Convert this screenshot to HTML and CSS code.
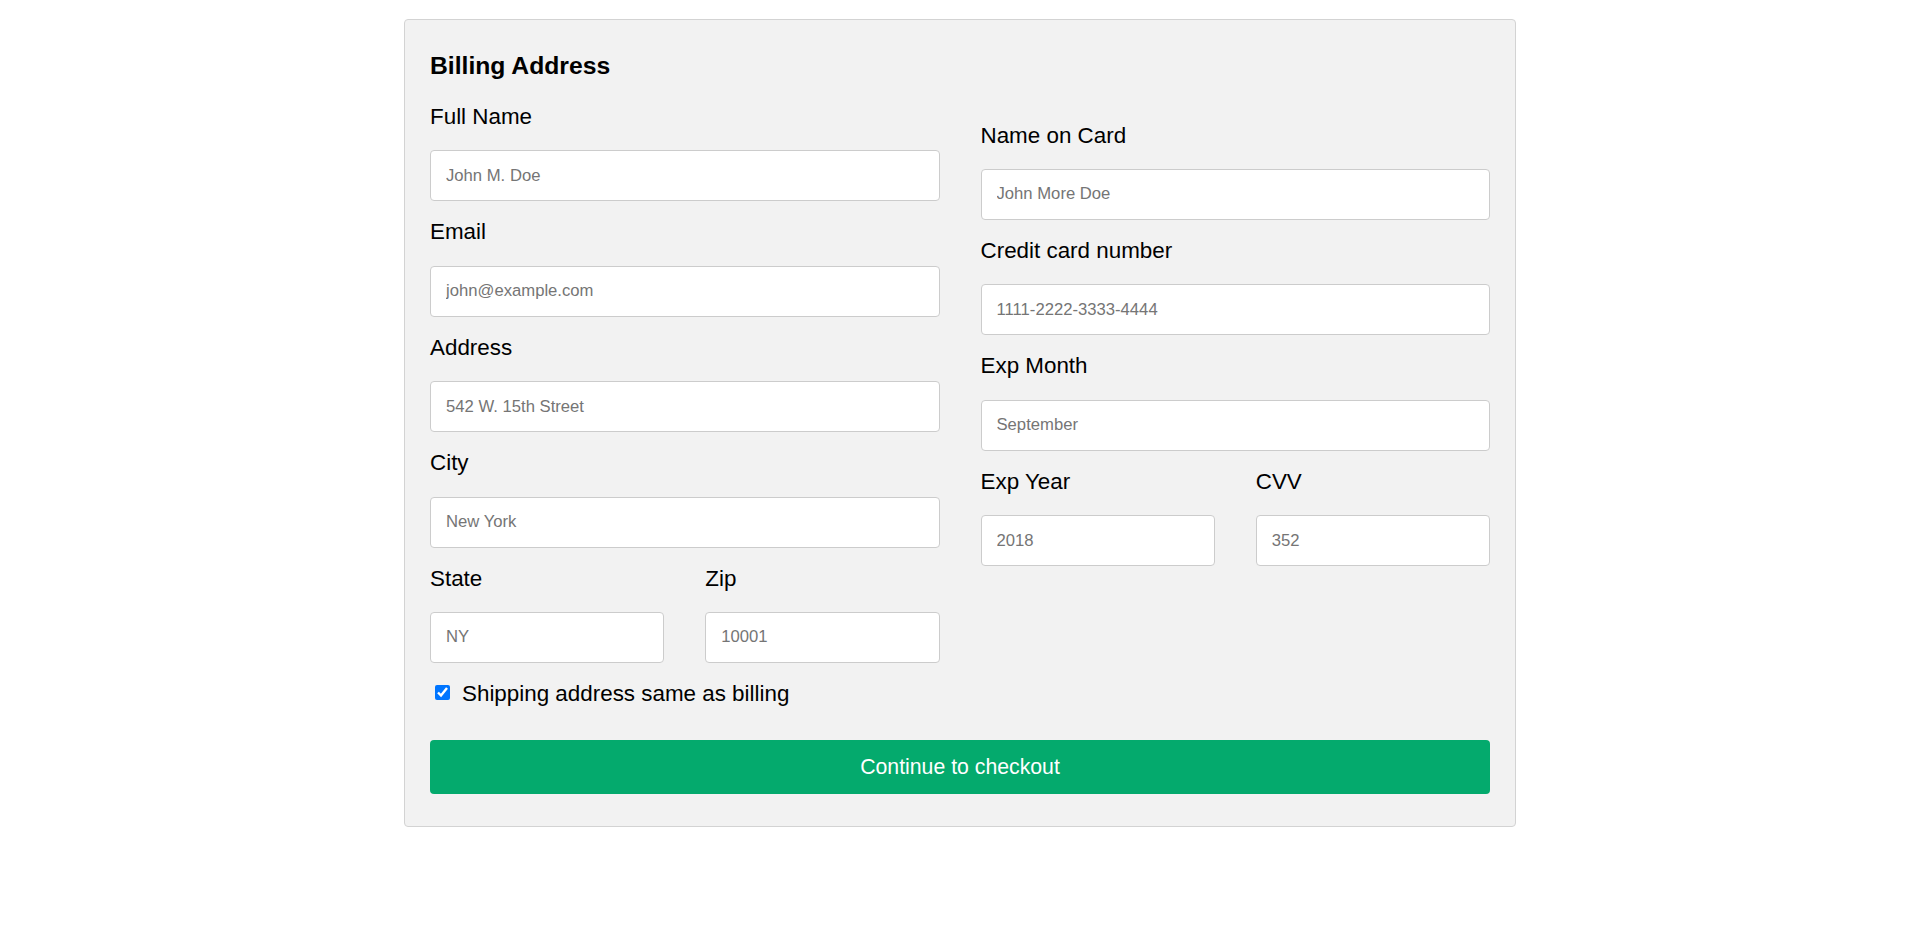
FILE: index.html
```html
<!DOCTYPE html>
<html lang="en">
<head>
<meta charset="utf-8">
<title>Checkout</title>
<link rel="stylesheet" href="styles.css">
</head>
<body>
<div class="container">
  <form class="form">
    <h3 class="title">Billing Address</h3>
    <div class="row">
      <div class="col">
        <label class="lbl" for="fname">Full Name</label>
        <input class="field" type="text" id="fname" placeholder="John M. Doe">
        <label class="lbl" for="email">Email</label>
        <input class="field" type="text" id="email" placeholder="john@example.com">
        <label class="lbl" for="adr">Address</label>
        <input class="field" type="text" id="adr" placeholder="542 W. 15th Street">
        <label class="lbl" for="city">City</label>
        <input class="field" type="text" id="city" placeholder="New York">
        <div class="row">
          <div class="col">
            <label class="lbl" for="state">State</label>
            <input class="field" type="text" id="state" placeholder="NY">
          </div>
          <div class="col">
            <label class="lbl" for="zip">Zip</label>
            <input class="field" type="text" id="zip" placeholder="10001">
          </div>
        </div>
      </div>
      <div class="col col-pay">
        <label class="lbl" for="cname">Name on Card</label>
        <input class="field" type="text" id="cname" placeholder="John More Doe">
        <label class="lbl" for="ccnum">Credit card number</label>
        <input class="field" type="text" id="ccnum" placeholder="1111-2222-3333-4444">
        <label class="lbl" for="expmonth">Exp Month</label>
        <input class="field" type="text" id="expmonth" placeholder="September">
        <div class="row">
          <div class="col">
            <label class="lbl" for="expyear">Exp Year</label>
            <input class="field" type="text" id="expyear" placeholder="2018">
          </div>
          <div class="col">
            <label class="lbl" for="cvv">CVV</label>
            <input class="field" type="text" id="cvv" placeholder="352">
          </div>
        </div>
      </div>
    </div>
    <label class="lbl check"><input class="checkbox" type="checkbox" checked>Shipping address same as billing</label>
    <button class="btn" type="button">Continue to checkout</button>
  </form>
</div>
</body>
</html>
```

FILE: styles.css
```css
* {
  box-sizing: border-box;
}

body {
  margin: 0;
  background: #ffffff;
  font-family: "Liberation Sans", Arial, sans-serif;
  color: #000000;
}

.container {
  width: 1112px;
  margin: 19px auto 0;
  background-color: #f2f2f2;
  border: 1px solid #d3d3d3;
  border-radius: 4px;
  padding: 6px 25px 19px 25px;
}

.form {
  margin: 0;
}

.title {
  font-size: 24.7px;
  line-height: 28px;
  font-weight: bold;
  margin: 26px 0 24px;
}

.row {
  display: flex;
  gap: 41px;
}

.col {
  flex: 1 1 0;
  min-width: 0;
}

.col-pay {
  padding-top: 18.6px;
}

.lbl {
  display: block;
  font-size: 22.4px;
  line-height: 25px;
  margin-bottom: 21.4px;
}

.field {
  display: block;
  width: 100%;
  height: 51px;
  margin: 0 0 18px;
  padding: 0 15px;
  border: 1px solid #cccccc;
  border-radius: 4px;
  background: #ffffff;
  font-family: "Liberation Sans", Arial, sans-serif;
  font-size: 16.67px;
  color: #000000;
}

.field::placeholder {
  color: #757575;
}

.check {
  display: flex;
  align-items: center;
  margin-bottom: 0;
}

.checkbox {
  width: 15px;
  height: 15px;
  margin: -2px 12px 0 5px;
}

.btn {
  display: block;
  width: 100%;
  margin: 34px 0 12.5px;
  padding: 15px;
  border: none;
  border-radius: 4px;
  background-color: #04aa6d;
  color: #ffffff;
  font-family: "Liberation Sans", Arial, sans-serif;
  font-size: 21.25px;
  line-height: 24.5px;
  cursor: pointer;
}
```
